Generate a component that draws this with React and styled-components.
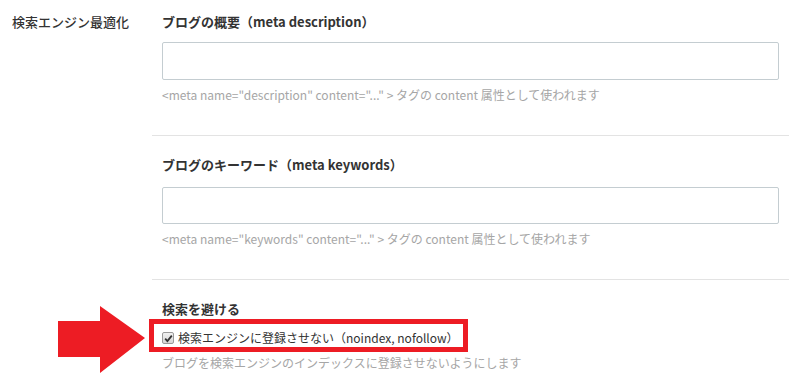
import styled, { createGlobalStyle } from "styled-components";

const GlobalStyle = createGlobalStyle`
  html, body {
    margin: 0;
    padding: 0;
    background: #ffffff;
  }
  body {
    font-family: "Noto Sans CJK JP", "Noto Sans", sans-serif;
    color: #333333;
    font-size: 13px;
  }
`;

const Page = styled.div`
  display: grid;
  grid-template-columns: 152px 637px;
  width: 797px;
  height: 389px;
  overflow: hidden;
`;

const SideLabel = styled.div`
  padding: 12px 0 0 12px;
  line-height: 20px;
  font-size: 13px;
  font-weight: 500;
  color: #333;
`;

const Fields = styled.div`
  display: flex;
  flex-direction: column;
`;

const Section = styled.section`
  padding: ${(p) => (p.$first ? "12px" : "19px")} 10px 31px;
  border-bottom: ${(p) => (p.$last ? "none" : "1px solid #e3e3e3")};
`;

const Heading = styled.h3`
  margin: 0;
  font-size: 13px;
  line-height: 20px;
  font-weight: 700;
  color: #333;
`;

const TextField = styled.input`
  display: block;
  box-sizing: border-box;
  width: 617px;
  height: ${(p) => p.$h || 38}px;
  margin-top: ${(p) => p.$gap || 10}px;
  border: 1px solid #c4cdd1;
  border-radius: 2px;
  background: #fff;
  outline: none;
`;

const Help = styled.p`
  margin: ${(p) => p.$gap || 6}px 0 0;
  font-size: 12px;
  line-height: 18px;
  color: #a6a6a6;
`;

const CheckRow = styled.label`
  position: relative;
  display: flex;
  align-items: center;
  gap: 4px;
  margin-top: 10px;
  line-height: 18px;
  font-size: 12px;
  color: #333;
`;

const CheckBox = styled.span`
  display: inline-flex;
  align-items: center;
  justify-content: center;
  box-sizing: border-box;
  width: 12px;
  height: 12px;
  border: 1px solid #9a9a9a;
  border-radius: 2px;
  background: linear-gradient(#f0f0f0, #d6d6d6);
`;

const Highlight = styled.span`
  position: absolute;
  left: -13px;
  top: -10px;
  width: 319px;
  height: 33px;
  box-sizing: border-box;
  border: 5px solid #ed1c24;
  pointer-events: none;
`;

const Arrow = styled.svg`
  position: absolute;
  left: -104px;
  top: -23px;
`;

export default function App() {
  return (
    <>
      <GlobalStyle />
      <Page>
        <SideLabel>検索エンジン最適化</SideLabel>
        <Fields>
          <Section $first>
            <Heading>ブログの概要（meta description）</Heading>
            <TextField type="text" />
            <Help>
              &lt;meta name="description" content="..." &gt; タグの content 属性として使われます
            </Help>
          </Section>
          <Section>
            <Heading>ブログのキーワード（meta keywords）</Heading>
            <TextField type="text" $h={37} $gap={12} />
            <Help>
              &lt;meta name="keywords" content="..." &gt; タグの content 属性として使われます
            </Help>
          </Section>
          <Section $last>
            <Heading>検索を避ける</Heading>
            <CheckRow>
              <CheckBox>
                <svg width="9" height="9" viewBox="0 0 9 9">
                  <path d="M1.2 4.6 L3.4 7 L7.8 1.6" fill="none" stroke="#333" strokeWidth="1.8" />
                </svg>
              </CheckBox>
              検索エンジンに登録させない（noindex, nofollow）
              <Highlight />
              <Arrow width="87" height="67" viewBox="0 0 87 67">
                <polygon points="0,15 42,15 42,0 87,32 42,67 42,51 0,51" fill="#ed1c24" />
              </Arrow>
            </CheckRow>
            <Help $gap={7}>
              ブログを検索エンジンのインデックスに登録させないようにします
            </Help>
          </Section>
        </Fields>
      </Page>
    </>
  );
}
